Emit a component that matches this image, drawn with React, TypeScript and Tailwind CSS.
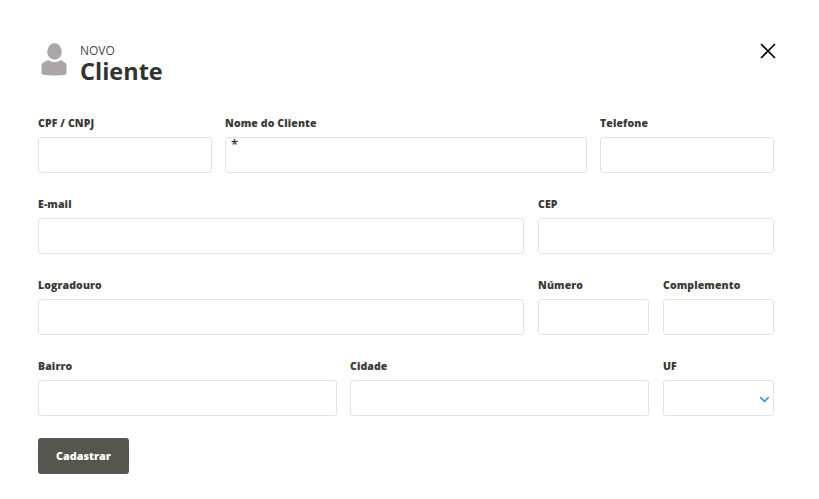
import React from "react";
import { ChevronDown } from "lucide-react";

function Field({ label, span, children }: { label: string; span: string; children?: React.ReactNode }) {
  return (
    <div className={span}>
      <div className="h-[19px] pt-[1px] mb-[4px] text-[10.5px] leading-[16px] font-extrabold text-[#3a3a36] tracking-[0.12px]">{label}</div>
      <div className="relative h-9 rounded-[3px] border border-[#e3e3e3] bg-white">{children}</div>
    </div>
  );
}

export default function App() {
  return (
    <div className="w-[819px] h-[499px] bg-white pl-[38px] pr-[45px] pt-[43px] font-['Open_Sans',sans-serif] overflow-hidden">
      <div className="flex items-start justify-between h-[71px]">
        <div className="flex items-start">
          <svg width="28" height="34" viewBox="0 0 28 34" className="ml-[2px]">
            <ellipse cx="14.500" cy="8.500" rx="7.300" ry="8.300" fill="#aca5aa" />
            <path d="M1.500 22.500c0-2.500 3-3.800 7-5.500 1.500 1.500 3.500 2 6 2s4.500-.5 6-2c3.500 1.700 6 3 6 5.500v8c0 1.300-5 2-12.500 2s-12.500-.7-12.500-2z" fill="#aca5aa" />
          </svg>
          <div className="ml-[12px]">
            <div className="text-[12px] leading-[16px] text-[#4a4a46]">NOVO</div>
            <div className="text-[23.500px] leading-[24px] font-bold text-[#33332f]">Cliente</div>
          </div>
        </div>
        <svg width="16" height="16" viewBox="0 0 16 16" className="mr-[-2px]" fill="none" stroke="#000" strokeWidth="1.600">
          <path d="M1 1l14 14M15 1L1 15" />
        </svg>
      </div>

      <div className="flex flex-col gap-y-[22px]">
        <div className="grid grid-cols-[174px_1fr_174px] gap-x-[13px]">
          <Field label="CPF / CNPJ" span="" />
          <Field label="Nome do Cliente" span="">
            <span className="absolute left-[5px] top-[-3px] text-[13px] leading-[18px] font-semibold text-[#33332f]">*</span>
          </Field>
          <Field label="Telefone" span="" />
        </div>
        <div className="grid grid-cols-12 gap-x-[14px]">
          <Field label="E-mail" span="col-span-8" />
          <Field label="CEP" span="col-span-4" />
        </div>
        <div className="grid grid-cols-12 gap-x-[14px]">
          <Field label="Logradouro" span="col-span-8" />
          <Field label="Número" span="col-span-2" />
          <Field label="Complemento" span="col-span-2" />
        </div>
        <div className="flex">
          <Field label="Bairro" span="w-[299px]" />
          <Field label="Cidade" span="w-[299px] ml-[13px]" />
          <Field label="UF" span="flex-1 ml-[14px]">
            <ChevronDown size={15} strokeWidth={3} className="absolute right-[1px] top-[11px] text-[#3b9bf0]" />
          </Field>
        </div>
      </div>

      <button className="mt-[22px] w-[91px] h-9 pt-[1px] rounded-[3px] bg-[#57564e] text-white text-[10.800px] font-extrabold">Cadastrar</button>
    </div>
  );
}
